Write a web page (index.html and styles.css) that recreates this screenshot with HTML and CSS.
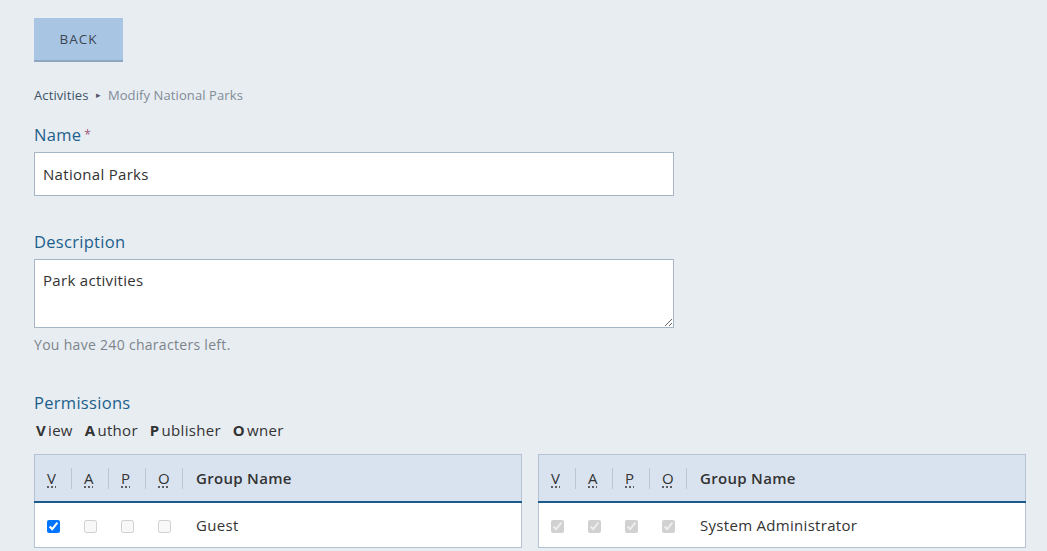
FILE: index.html
```html
<!DOCTYPE html>
<html lang="en">
<head>
<meta charset="utf-8">
<title>Modify National Parks</title>
<link rel="stylesheet" href="styles.css">
</head>
<body>
<main class="page">
  <button class="back-btn" type="button">BACK</button>

  <nav class="breadcrumb">
    <span class="crumb">Activities</span>
    <span class="crumb-sep">&#9656;</span>
    <span class="crumb current">Modify National Parks</span>
  </nav>

  <div class="field name-field">
    <label class="field-label" for="name">Name<span class="req">*</span></label>
    <input id="name" class="text-input" type="text" value="National Parks">
  </div>

  <div class="field desc-field">
    <label class="field-label" for="desc">Description</label>
    <textarea id="desc" class="text-area">Park activities</textarea>
    <p class="help">You have 240 characters left.</p>
  </div>

  <section class="perms">
    <h2 class="field-label perms-title">Permissions</h2>
    <div class="legend">
      <span class="legend-item"><b>V</b>iew</span>
      <span class="legend-item"><b>A</b>uthor</span>
      <span class="legend-item"><b>P</b>ublisher</span>
      <span class="legend-item"><b>O</b>wner</span>
    </div>

    <div class="tables">
      <table class="perm-table">
        <thead>
          <tr>
            <th class="cb-col sep"><abbr title="View">V</abbr></th>
            <th class="cb-col sep"><abbr title="Author">A</abbr></th>
            <th class="cb-col sep"><abbr title="Publisher">P</abbr></th>
            <th class="cb-col sep"><abbr title="Owner">O</abbr></th>
            <th class="name-col">Group Name</th>
          </tr>
        </thead>
        <tbody>
          <tr>
            <td class="cb-col"><input type="checkbox" checked></td>
            <td class="cb-col"><input type="checkbox" disabled></td>
            <td class="cb-col"><input type="checkbox" disabled></td>
            <td class="cb-col"><input type="checkbox" disabled></td>
            <td class="name-col">Guest</td>
          </tr>
        </tbody>
      </table>

      <table class="perm-table">
        <thead>
          <tr>
            <th class="cb-col sep"><abbr title="View">V</abbr></th>
            <th class="cb-col sep"><abbr title="Author">A</abbr></th>
            <th class="cb-col sep"><abbr title="Publisher">P</abbr></th>
            <th class="cb-col sep"><abbr title="Owner">O</abbr></th>
            <th class="name-col">Group Name</th>
          </tr>
        </thead>
        <tbody>
          <tr>
            <td class="cb-col"><input type="checkbox" checked disabled></td>
            <td class="cb-col"><input type="checkbox" checked disabled></td>
            <td class="cb-col"><input type="checkbox" checked disabled></td>
            <td class="cb-col"><input type="checkbox" checked disabled></td>
            <td class="name-col">System Administrator</td>
          </tr>
        </tbody>
      </table>
    </div>
  </section>
</main>
</body>
</html>
```

FILE: styles.css
```css
* { box-sizing: border-box; }

html, body {
  margin: 0;
  padding: 0;
  background: #e8edf2;
}

body {
  font-family: "Open Sans", "Noto Sans", sans-serif;
  color: #333;
  overflow: hidden;
  letter-spacing: 0.3px;
}

.page {
  padding: 18px 21px 0 34px;
}

.back-btn {
  display: block;
  width: 89px;
  height: 44px;
  background: #a8c5e4;
  border: none;
  border-bottom: 2px solid #8ea6c0;
  color: #3d4652;
  font-family: inherit;
  font-size: 13.5px;
  letter-spacing: 1px;
  padding: 0;
}

.breadcrumb {
  margin-top: 25px;
  font-size: 13px;
  line-height: 16px;
  display: flex;
  align-items: center;
  gap: 7px;
}

.crumb { color: #3f5468; letter-spacing: 0.1px; }
.crumb.current { color: #808b96; }
.crumb-sep { font-size: 9px; color: #556; }

.field-label {
  display: block;
  font-size: 16.5px;
  font-weight: 400;
  line-height: 22px;
  color: #1c5f8c;
  margin: 0 0 6px;
}

.req {
  color: #a35577;
  font-size: 12px;
  vertical-align: top;
  margin-left: 3px;
}

.name-field { margin-top: 21px; }
.desc-field { margin-top: 35px; }

.text-input,
.text-area {
  display: block;
  width: 640px;
  border: 1px solid #a7b6c6;
  background: #fff;
  font-family: inherit;
  font-size: 15px;
  letter-spacing: 0.3px;
  color: #333;
  padding: 0 8px;
  margin: 0;
}

.text-input { height: 44px; }

.text-area {
  height: 69px;
  padding-top: 10px;
  resize: vertical;
  line-height: 20px;
}

.help {
  margin: 8px 0 0;
  font-size: 14px;
  color: #7d848b;
  line-height: 18px;
}

.perms { margin-top: 38px; }

.perms-title { margin-bottom: 7px; }

.legend {
  display: flex;
  gap: 12px;
  font-size: 15px;
  line-height: 18px;
  color: #333;
  padding-left: 2px;
}

.legend b {
  font-weight: 700;
  margin-right: 2px;
}

.tables {
  margin-top: 15px;
  display: grid;
  grid-template-columns: 488px 488px;
  gap: 16px;
}

.perm-table {
  width: 100%;
  border-collapse: collapse;
  border: 1px solid #b3c3d4;
  background: #fff;
  font-size: 15px;
}

.perm-table thead tr {
  background: #d9e3ef;
  border-bottom: 2px solid #1b5a8a;
}

.perm-table th {
  height: 47px;
  text-align: left;
  font-weight: 600;
  color: #333;
  padding: 0 12px;
  position: relative;
}

.perm-table td {
  height: 46px;
  padding: 0 12px;
  color: #333;
  border-bottom: 1px solid #b3c3d4;
}

.cb-col { width: 37px; }

.perm-table th.name-col,
.perm-table td.name-col { padding-left: 13px; }

.sep::after {
  content: "";
  position: absolute;
  right: 0;
  top: 13px;
  bottom: 12px;
  border-right: 1px solid #b9c6d4;
}

abbr {
  text-decoration: underline dotted;
  text-underline-offset: 3px;
  font-weight: 400;
}

td input[type="checkbox"] {
  margin: 0;
  width: 13px;
  height: 13px;
  vertical-align: middle;
}
```
